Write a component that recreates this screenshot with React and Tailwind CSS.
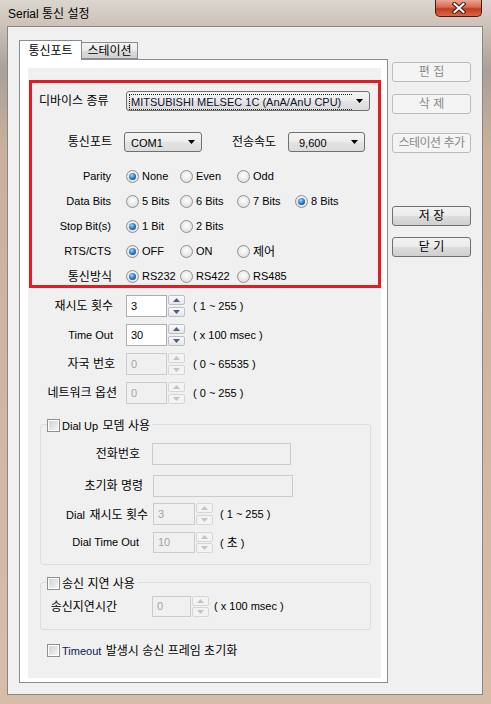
import React from "react";

function Tri({ up, color }) {
  return (
    <svg width="7" height="4" viewBox="0 0 7 4">
      {up ? <polygon points="0,4 3.5,0 7,4" fill={color} /> : <polygon points="0,0 7,0 3.5,4" fill={color} />}
    </svg>
  );
}

function Radio({ checked, children, className }) {
  return (
    <div className={"flex items-center " + (className || "")}>
      <span className="flex h-[13px] w-[13px] shrink-0 items-center justify-center rounded-full border border-[#8e8f8f] bg-[radial-gradient(circle_at_50%_40%,#ffffff,#d6d6d6)]">
        {checked && (
          <span className="h-[7px] w-[7px] rounded-full bg-[radial-gradient(circle_at_40%_35%,#9fd6ff,#2371c2_55%,#0d3d78)]" />
        )}
      </span>
      <span className="ml-[3px] whitespace-nowrap text-[11px] text-black">{children}</span>
    </div>
  );
}

function Check({ children, className }) {
  return (
    <div className={"flex items-center " + (className || "")}>
      <span className="flex h-[13px] w-[13px] shrink-0 items-center justify-center border border-[#8e8f8f] bg-white">
        <span className="h-[9px] w-[9px] bg-[linear-gradient(135deg,#d3d3d3,#f4f4f4)]" />
      </span>
      <span className="ml-[2px] whitespace-nowrap text-black">{children}</span>
    </div>
  );
}

function Combo({ children, className }) {
  return (
    <div className={"flex h-[20px] items-center rounded-[3px] border border-[#707070] bg-[linear-gradient(#f4f4f4,#ececec_50%,#e3e3e3_51%,#dcdcdc)] " + (className || "")}>
      <div className="flex-1 overflow-hidden whitespace-nowrap">{children}</div>
      <svg width="7" height="4" viewBox="0 0 7 4" className="mr-[6px] ml-[4px] shrink-0">
        <polygon points="0,0 7,0 3.5,4" fill="#000" />
      </svg>
    </div>
  );
}

function SpinBtn({ up, disabled }) {
  return (
    <div className={"flex h-[10px] items-center justify-center rounded-[2px] border " + (disabled ? "border-[#d6d6d6] bg-[#f3f3f3]" : "border-[#bcc0c6] bg-[linear-gradient(#fbfbfb,#e6e6e6)]")}>
      <Tri up={up} color={disabled ? "#c4c4c4" : "#4b5e88"} />
    </div>
  );
}

function Spin({ value, disabled, editW, h }) {
  return (
    <div className={"flex " + (h || "h-[22px]")}>
      <div className={"flex items-center border pl-[4px] text-[11px] " + editW + " " + (disabled ? "border-[#cbcbcb] bg-[#f0f0f0] text-[#a3a3a3]" : "border-[#abadb3] bg-white text-black")}>
        {value}
      </div>
      <div className="ml-[1px] flex w-[17px] flex-col justify-between">
        <SpinBtn up disabled={disabled} />
        <SpinBtn disabled={disabled} />
      </div>
    </div>
  );
}

function Btn({ children, disabled, className }) {
  return (
    <div className={"flex h-[20px] w-[79px] items-center justify-center rounded-[3px] border text-[12px] " + (disabled ? "border-[#b8bcbf] bg-[#f4f4f4] text-[#8a8a8a]" : "border-[#707070] bg-[linear-gradient(#f2f2f2,#ebebeb_50%,#dddddd_51%,#cfcfcf)] text-black") + " " + (className || "")}>
      {children}
    </div>
  );
}

export default function App() {
  return (
    <div className="h-[704px] w-[491px] overflow-hidden bg-[linear-gradient(180deg,#dcd6d0_0px,#cbc0b6_28px,#a9a09a_70px,#c9b19b_150px,#d6bea8_100%)] font-['Liberation_Sans','Noto_Sans_CJK_KR',sans-serif] text-black">
      {/* title bar */}
      <div className="flex h-[26px] items-start justify-between">
        <div className="pl-[8px] pt-[5px] text-[12px] text-black">Serial 통신 설정</div>
        <div className="mr-[9px] flex h-[17px] w-[47px] items-center justify-center rounded-b-[5px] border border-t-0 border-[#4a1a10] bg-[linear-gradient(#e9a797,#d8684f_45%,#c23b20_55%,#d9674a)]">
          <svg width="14" height="12" viewBox="0 0 14 12">
            <path d="M2.5 2 L11.5 10 M11.5 2 L2.5 10" stroke="#3a1a14" strokeWidth="4" strokeLinecap="square" />
            <path d="M2.5 2 L11.5 10 M11.5 2 L2.5 10" stroke="#ffffff" strokeWidth="2" strokeLinecap="square" />
          </svg>
        </div>
      </div>

      {/* client area */}
      <div className="ml-[7px] h-[669px] w-[476px] border border-[#8a8683] bg-[#f0f0f0]">
        <div className="flex pl-[11px] pt-[13px]">
          {/* tab control */}
          <div className="flex w-[369px] flex-col">
            <div className="flex h-[19px] items-end">
              <div className="relative z-10 -mb-[1px] flex h-[20px] w-[63px] items-center justify-center border border-b-0 border-[#898c95] bg-white text-[12px]">
                통신포트
              </div>
              <div className="flex h-[17px] w-[56px] items-center justify-center border border-l-0 border-[#898c95] bg-[linear-gradient(#f3f3f3,#ebebeb_50%,#dddddd_51%,#cfcfcf)] pt-[1px] text-[12px]">
                스테이션
              </div>
            </div>
            <div className="flex h-[624px] flex-col border border-[#898c95] bg-white pb-[4px] pl-[8px] pr-[6px] pt-[8px]">
              <div className="flex flex-1 flex-col bg-[#f0f0f0]">
                {/* red highlight box */}
                <div className="ml-[1px] mt-[12px] h-[208px] w-[352px] border-[3px] border-[#e31b23]">
                  <div className="mt-[8px] flex h-[20px] items-center">
                    <div className="ml-[7px] w-[87px] text-[12px]">디바이스 종류</div>
                    <Combo className="w-[244px]">
                      <span className="ml-[2px] inline-block border border-dotted border-[#222] pl-[1px] pr-[28px] text-[11px] leading-[14px] text-[#101030]">
                        MITSUBISHI MELSEC 1C (AnA/AnU CPU)
                      </span>
                    </Combo>
                  </div>
                  <div className="mt-[21px] flex h-[20px] items-center">
                    <div className="w-[80px] text-right text-[12px]">통신포트</div>
                    <Combo className="ml-[12px] w-[78px]">
                      <span className="pl-[6px] text-[11px]">COM1</span>
                    </Combo>
                    <div className="ml-[30px] w-[48px] text-[12px]">전송속도</div>
                    <Combo className="ml-[8px] w-[77px]">
                      <span className="pl-[10px] text-[11px]">9,600</span>
                    </Combo>
                  </div>
                  <div className="mt-[12px] flex h-[25px] items-center">
                    <div className="w-[79px] text-right text-[11px]">Parity</div>
                    <div className="ml-[15px] flex">
                      <Radio checked className="w-[54px]">None</Radio>
                      <Radio className="w-[57px]">Even</Radio>
                      <Radio className="w-[58px]">Odd</Radio>
                    </div>
                  </div>
                  <div className="flex h-[25px] items-center">
                    <div className="w-[79px] text-right text-[11px]">Data Bits</div>
                    <div className="ml-[15px] flex">
                      <Radio className="w-[54px]">5 Bits</Radio>
                      <Radio className="w-[57px]">6 Bits</Radio>
                      <Radio className="w-[58px]">7 Bits</Radio>
                      <Radio checked>8 Bits</Radio>
                    </div>
                  </div>
                  <div className="flex h-[25px] items-center">
                    <div className="w-[79px] text-right text-[11px]">Stop Bit(s)</div>
                    <div className="ml-[15px] flex">
                      <Radio checked className="w-[54px]">1 Bit</Radio>
                      <Radio className="w-[57px]">2 Bits</Radio>
                    </div>
                  </div>
                  <div className="flex h-[25px] items-center">
                    <div className="w-[79px] text-right text-[11px]">RTS/CTS</div>
                    <div className="ml-[15px] flex">
                      <Radio checked className="w-[54px]">OFF</Radio>
                      <Radio className="w-[57px]">ON</Radio>
                      <Radio className="w-[58px]"><span className="text-[12px]">제어</span></Radio>
                    </div>
                  </div>
                  <div className="flex h-[25px] items-center">
                    <div className="w-[80px] text-right text-[12px]">통신방식</div>
                    <div className="ml-[14px] flex">
                      <Radio checked className="w-[54px]">RS232</Radio>
                      <Radio className="w-[57px]">RS422</Radio>
                      <Radio className="w-[58px]">RS485</Radio>
                    </div>
                  </div>
                </div>

                {/* numeric settings */}
                <div className="mt-[7px] flex flex-col gap-[7px]">
                  <div className="flex h-[22px] items-center">
                    <div className="w-[85px] text-right text-[12px]">재시도 횟수</div>
                    <div className="ml-[13px]"><Spin value="3" editW="w-[41px]" /></div>
                    <div className="ml-[8px] text-[11px]">( 1 ~ 255 )</div>
                  </div>
                  <div className="flex h-[22px] items-center">
                    <div className="w-[85px] text-right text-[11px]">Time Out</div>
                    <div className="ml-[13px]"><Spin value="30" editW="w-[41px]" /></div>
                    <div className="ml-[8px] text-[11px]">( x 100 msec )</div>
                  </div>
                  <div className="flex h-[22px] items-center">
                    <div className="w-[87px] text-right text-[12px]">자국 번호</div>
                    <div className="ml-[11px]"><Spin value="0" disabled editW="w-[41px]" /></div>
                    <div className="ml-[8px] text-[11px]">( 0 ~ 65535 )</div>
                  </div>
                  <div className="flex h-[22px] items-center">
                    <div className="w-[89px] text-right text-[12px]">네트워크 옵션</div>
                    <div className="ml-[9px]"><Spin value="0" disabled editW="w-[41px]" /></div>
                    <div className="ml-[8px] text-[11px]">( 0 ~ 255 )</div>
                  </div>
                </div>

                {/* Dial Up group */}
                <div className="ml-[12px] mt-[20px] flex w-[331px] flex-col rounded-[3px] border border-[#d5dfe5] pb-[11px]">
                  <div className="-mt-[7px] ml-[6px] flex h-[14px] w-fit items-center bg-[#f0f0f0] pr-[2px]">
                    <Check>
                      <span className="text-[11px]">Dial Up</span> <span className="text-[12px]">모뎀 사용</span>
                    </Check>
                  </div>
                  <div className="mt-[11px] flex h-[22px] items-center">
                    <div className="w-[99px] text-right text-[12px]">전화번호</div>
                    <div className="ml-[12px] h-[22px] w-[139px] border border-[#cbcbcb] bg-[#f0f0f0]" />
                  </div>
                  <div className="mt-[10px] flex h-[22px] items-center">
                    <div className="w-[102px] text-right text-[12px]">초기화 명령</div>
                    <div className="ml-[10px] h-[22px] w-[140px] border border-[#cbcbcb] bg-[#f0f0f0]" />
                  </div>
                  <div className="mt-[6px] flex h-[22px] items-center">
                    <div className="w-[107px] text-right">
                      <span className="text-[11px]">Dial</span> <span className="text-[12px]">재시도 횟수</span>
                    </div>
                    <div className="ml-[5px]"><Spin value="3" disabled editW="w-[42px]" /></div>
                    <div className="ml-[7px] text-[11px]">( 1 ~ 255 )</div>
                  </div>
                  <div className="mt-[7px] flex h-[21px] items-center">
                    <div className="w-[98px] text-right text-[11px]">Dial Time Out</div>
                    <div className="ml-[14px]"><Spin value="10" disabled editW="w-[42px]" h="h-[21px]" /></div>
                    <div className="ml-[7px] text-[11px]">( <span className="text-[12px]">초</span> )</div>
                  </div>
                </div>

                {/* send delay group */}
                <div className="ml-[12px] mt-[17px] flex w-[331px] flex-col rounded-[3px] border border-[#d5dfe5] pb-[12px]">
                  <div className="-mt-[7px] ml-[6px] flex h-[14px] w-fit items-center bg-[#f0f0f0] pr-[3px]">
                    <Check><span className="text-[12px]">송신 지연 사용</span></Check>
                  </div>
                  <div className="mt-[6px] flex h-[21px] items-center">
                    <div className="w-[76px] text-right text-[12px]">송신지연시간</div>
                    <div className="ml-[35px]"><Spin value="0" disabled editW="w-[39px]" h="h-[21px]" /></div>
                    <div className="ml-[5px] text-[11px]">( x 100 msec )</div>
                  </div>
                </div>

                <Check className="ml-[19px] mt-[13px] h-[14px]">
                  <span className="text-[11px] text-[#0b1850]">Timeout</span> <span className="text-[12px]">발생시 송신 프레임 초기화</span>
                </Check>
              </div>
            </div>
          </div>

          {/* right buttons */}
          <div className="ml-[4px] flex flex-col">
            <Btn disabled className="mt-[22px]">편 집</Btn>
            <Btn disabled className="mt-[12px]">삭 제</Btn>
            <Btn disabled className="mt-[19px] tracking-[-0.5px]">스테이션 추가</Btn>
            <Btn className="mt-[53px]">저 장</Btn>
            <Btn className="mt-[11px]">닫 기</Btn>
          </div>
        </div>
      </div>
    </div>
  );
}
